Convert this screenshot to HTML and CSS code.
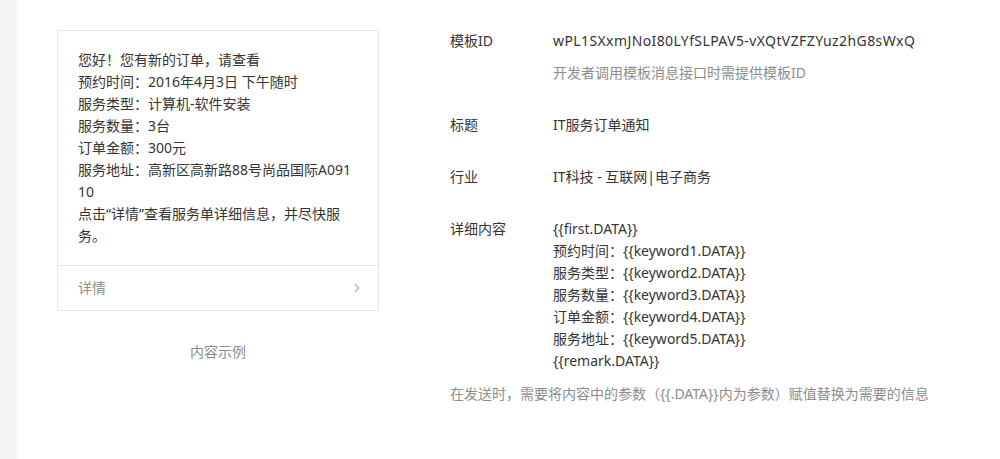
FILE: index.html
```html
<!DOCTYPE html>
<html>
<head>
	<title>模板详情</title>
	<meta charset="utf-8">
	<link rel="stylesheet" href="styles.css">
</head>
<body>
	<div class="page">
		<div class="side"></div>
		<div class="main">
			<div class="preview">
				<div class="card">
					<div class="card-body">
						<p>您好！您有新的订单，请查看</p>
						<p>预约时间：2016年4月3日 下午随时</p>
						<p>服务类型：计算机-软件安装</p>
						<p>服务数量：3台</p>
						<p>订单金额：300元</p>
						<p>服务地址：高新区高新路88号尚品国际A09110</p>
						<p>点击“详情”查看服务单详细信息，并尽快服务。</p>
					</div>
					<div class="card-foot">
						<span>详情</span>
						<svg class="arrow" width="8" height="12" viewBox="0 0 8 12"><polyline points="2,2 6,6 2,10" fill="none" stroke="#b2b2b2" stroke-width="1.2"/></svg>
					</div>
				</div>
				<div class="caption">内容示例</div>
			</div>
			<div class="info">
				<div class="row">
					<div class="label">模板ID</div>
					<div class="value">
						<div class="tpl-id">wPL1SXxmJNoI80LYfSLPAV5-vXQtVZFZYuz2hG8sWxQ</div>
						<div class="tip">开发者调用模板消息接口时需提供模板ID</div>
					</div>
				</div>
				<div class="row">
					<div class="label">标题</div>
					<div class="value">IT服务订单通知</div>
				</div>
				<div class="row">
					<div class="label">行业</div>
					<div class="value">IT科技 - 互联网|电子商务</div>
				</div>
				<div class="row row-last">
					<div class="label">详细内容</div>
					<div class="value">
						<div>{{first.DATA}}</div>
						<div>预约时间：{{keyword1.DATA}}</div>
						<div>服务类型：{{keyword2.DATA}}</div>
						<div>服务数量：{{keyword3.DATA}}</div>
						<div>订单金额：{{keyword4.DATA}}</div>
						<div>服务地址：{{keyword5.DATA}}</div>
						<div>{{remark.DATA}}</div>
					</div>
				</div>
				<div class="note">在发送时，需要将内容中的参数（{{.DATA}}内为参数）赋值替换为需要的信息</div>
			</div>
		</div>
	</div>
</body>
</html>
```

FILE: styles.css
```css
*{margin:0;padding:0;box-sizing:border-box;}
body{font-family:"Noto Sans","Noto Sans CJK SC",sans-serif;font-size:14px;line-height:22px;color:#353535;background:#fff;}
.page{display:flex;min-height:100vh;}
.side{width:17px;background:#f4f5f7;}
.main{flex:1;display:flex;gap:71px;padding:30px 0 0 40px;}
.preview{width:322px;}
.card{border:1px solid #e4e7eb;}
.card-body{padding:18px 20px;word-break:break-all;}
.card-foot{display:flex;justify-content:space-between;align-items:center;border-top:1px solid #e4e7eb;padding:11px 17px 11px 20px;color:#8d8d8d;}
.arrow{display:block;}
.caption{margin-top:30px;text-align:center;color:#8d8d8d;}
.info{flex:1;}
.row{display:flex;margin-bottom:30px;}
.row-last{margin-bottom:11px;}
.label{width:103px;flex-shrink:0;}
.tpl-id{letter-spacing:0.4px;}
.tip{margin-top:10px;color:#8d8d8d;}
.note{color:#8d8d8d;}
```
